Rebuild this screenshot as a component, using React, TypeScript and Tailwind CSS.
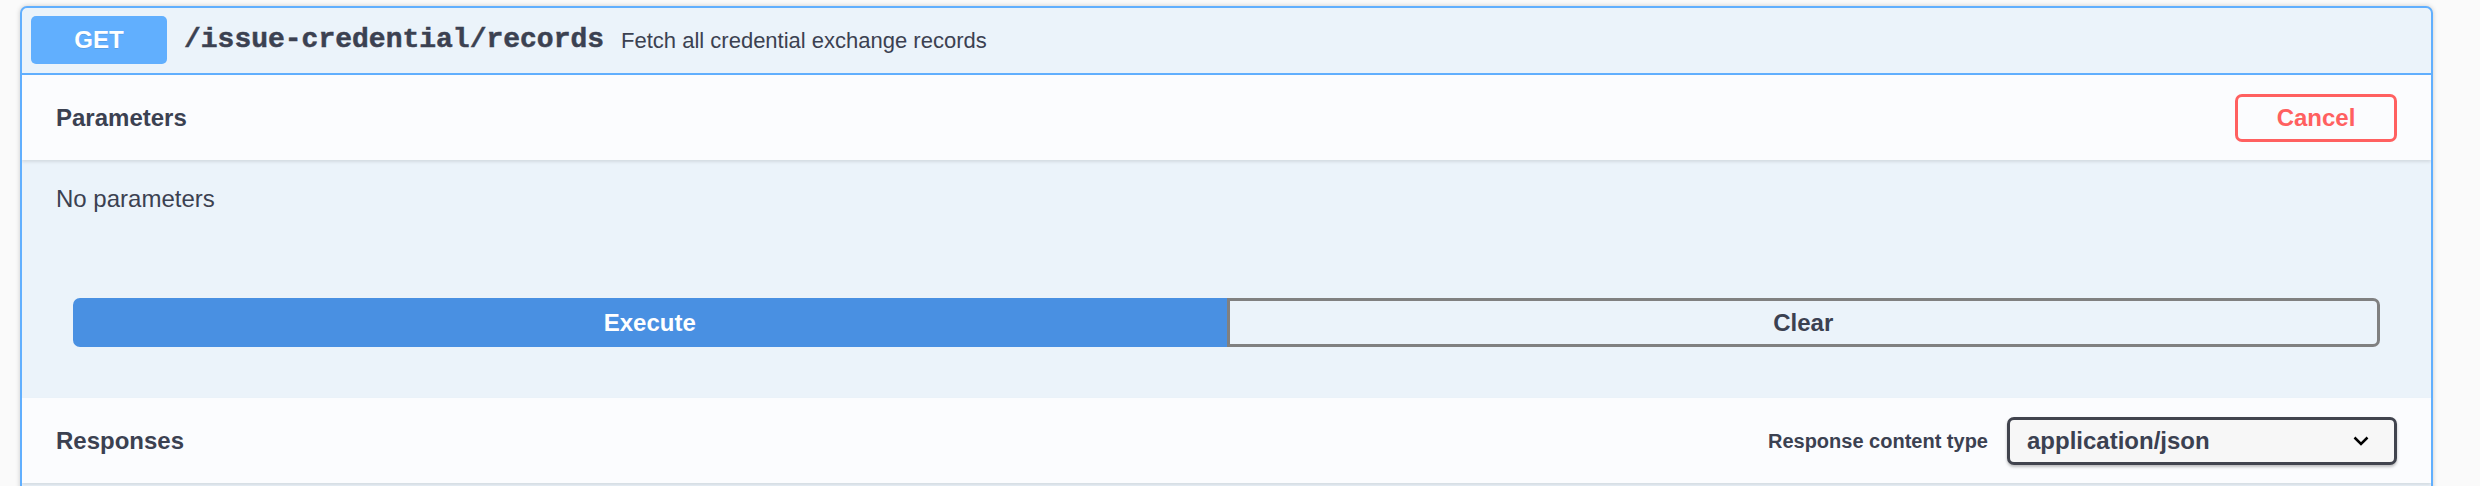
import { useState } from "react";

const ink = "text-[#3b4151]";

function SectionHeader({ children }: { children: React.ReactNode }) {
    return (
        <div className="h-[85px] bg-[#fbfcfe] shadow-[0_2px_3px_rgba(0,0,0,0.1)] flex justify-between items-center px-[34px]">
            {children}
        </div>
    );
}

export default function App() {
    const [mediaType, setMediaType] = useState("application/json");

    return (
        <div className="h-[486px] overflow-hidden bg-[#fafafa] pt-[6px] pl-[20px] font-['Liberation_Sans',Arial,sans-serif]">
            <div className="w-[2413px] bg-[#ebf3fa] border-2 border-[#61affe] rounded-[7px] shadow-[0_0_5px_rgba(0,0,0,0.19)] overflow-hidden">
                {/* summary row */}
                <div className="flex items-center pt-[8px] pb-[9px] px-[9px] border-b-2 border-[#61affe]">
                    <span className="w-[136px] h-[48px] rounded-[5px] bg-[#61affe] text-white font-bold text-[24px] flex justify-center items-center [text-shadow:0_1px_0_rgba(0,0,0,0.1)]">
                        GET
                    </span>
                    <span className={`ml-[17px] font-['Liberation_Mono',monospace] font-bold text-[28px] [-webkit-text-stroke:0.5px_#3b4151] ${ink}`}>
                        /issue-credential/records
                    </span>
                    <span className={`ml-[17px] text-[22px] ${ink}`}>
                        Fetch all credential exchange records
                    </span>
                </div>

                <SectionHeader>
                    <h4 className={`font-bold text-[24px] ${ink}`}>Parameters</h4>
                    <button className="w-[162px] h-[48px] border-[3px] border-[#ff6060] rounded-[7px] text-[#ff6060] font-bold text-[24px]">
                        Cancel
                    </button>
                </SectionHeader>

                <div className="h-[87px] pt-[25px] px-[34px]">
                    <p className={`text-[24px] leading-[28px] ${ink}`}>No parameters</p>
                </div>

                <div className="flex p-[51px]">
                    <button className="w-1/2 h-[49px] bg-[#4990e2] border-[3px] border-[#4990e2] rounded-l-[7px] text-white font-bold text-[24px]">
                        Execute
                    </button>
                    <button className={`w-1/2 h-[49px] border-[3px] border-[#808080] rounded-r-[7px] font-bold text-[24px] ${ink}`}>
                        Clear
                    </button>
                </div>

                <SectionHeader>
                    <h4 className={`font-bold text-[24px] ${ink}`}>Responses</h4>
                    <div className="flex items-center">
                        <span className={`mr-[19px] font-bold text-[20px] ${ink}`}>Response content type</span>
                        <div className="relative w-[390px] h-[48px]">
                            <select
                                value={mediaType}
                                onChange={(e) => setMediaType(e.target.value)}
                                className={`appearance-none w-full h-full pl-[17px] bg-[#f7f7f7] border-[3px] border-[#41444e] rounded-[7px] shadow-[0_2px_3px_rgba(0,0,0,0.25)] font-bold text-[24px] ${ink}`}
                            >
                                <option value="application/json">application/json</option>
                            </select>
                            <svg
                                className="absolute right-[28px] top-[19px] pointer-events-none"
                                width="16"
                                height="10"
                                viewBox="0 0 16 10"
                                fill="none"
                                stroke="#000"
                                strokeWidth="2.5"
                            >
                                <path d="M1.5 1.5 L8 8 L14.5 1.5" />
                            </svg>
                        </div>
                    </div>
                </SectionHeader>
                <div className="h-[40px]" />
            </div>
        </div>
    );
}
